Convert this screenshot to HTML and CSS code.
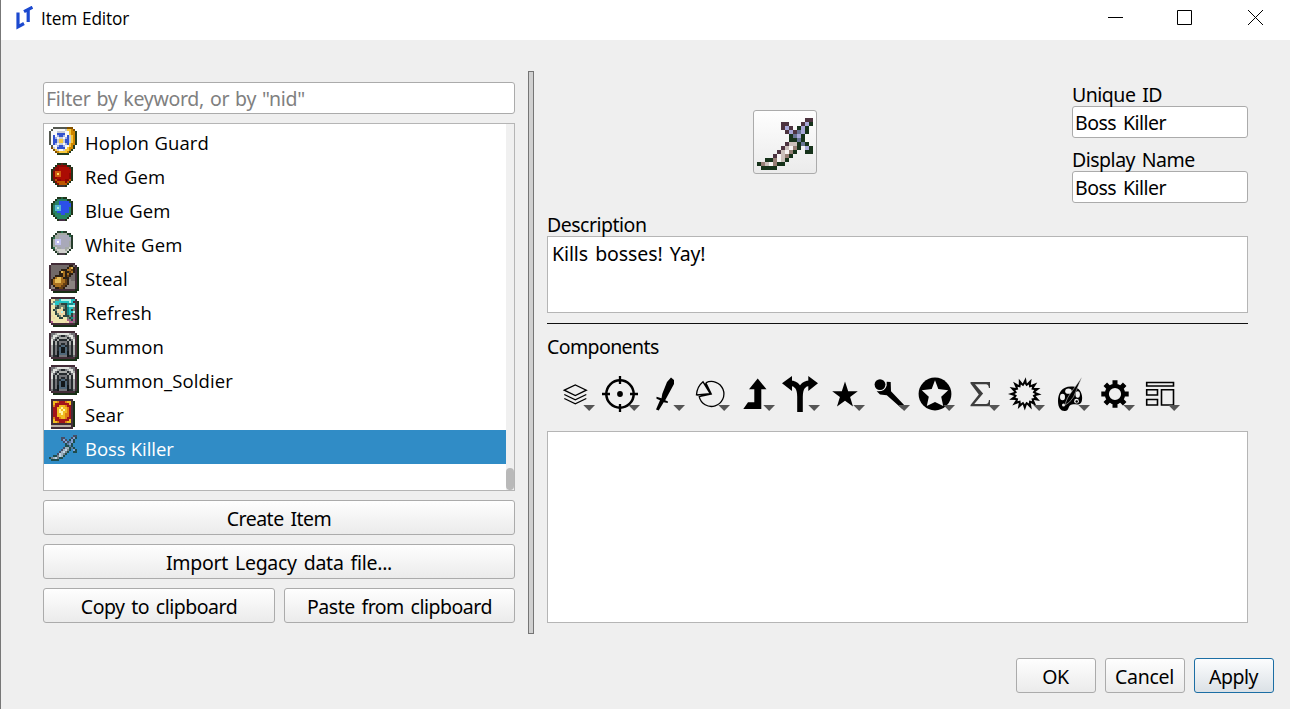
FILE: index.html
```html
<!DOCTYPE html>
<html lang="en">
<head>
<meta charset="utf-8">
<title>Item Editor</title>
<link rel="stylesheet" href="styles.css">
</head>
<body>
<div class="window">
  <header class="titlebar">
    <svg class="logo" viewBox="0 0 18 24"><path d="M3 6.5V20.8L9 17.5M9 5.7L17.5 1.2M13.2 3.5V16" fill="none" stroke="#1c49cf" stroke-width="3.2"/></svg>
    <h1 class="title">Item Editor</h1>
    <div class="controls">
      <svg viewBox="0 0 16 16"><path d="M1 7.5H16"/></svg>
      <svg viewBox="0 0 16 16"><path d="M.5 .5H14.5V14.5H.5Z"/></svg>
      <svg viewBox="0 0 16 16"><path d="M1 0L16 15M16 0L1 15"/></svg>
    </div>
  </header>

  <main class="content">
    <section class="browser">
      <input class="field filter" type="text" placeholder="Filter by keyword, or by &quot;nid&quot;">
      <div class="list">
        <ul class="items">
          <li class="item"><svg class="sprite" data-sprite="shield"></svg><span>Hoplon Guard</span></li>
          <li class="item"><svg class="sprite" data-sprite="redGem"></svg><span>Red Gem</span></li>
          <li class="item"><svg class="sprite" data-sprite="blueGem"></svg><span>Blue Gem</span></li>
          <li class="item"><svg class="sprite" data-sprite="whiteGem"></svg><span>White Gem</span></li>
          <li class="item"><svg class="sprite" data-sprite="steal"></svg><span>Steal</span></li>
          <li class="item"><svg class="sprite" data-sprite="refresh"></svg><span>Refresh</span></li>
          <li class="item"><svg class="sprite" data-sprite="summon"></svg><span>Summon</span></li>
          <li class="item"><svg class="sprite" data-sprite="summon"></svg><span>Summon_Soldier</span></li>
          <li class="item"><svg class="sprite" data-sprite="sear"></svg><span>Sear</span></li>
          <li class="item selected"><svg class="sprite" data-sprite="sword"></svg><span>Boss Killer</span></li>
        </ul>
        <div class="scrollbar"><div class="thumb"></div></div>
      </div>
      <button class="btn">Create Item</button>
      <button class="btn import">Import Legacy data file...</button>
      <div class="pair">
        <button class="btn copy">Copy to clipboard</button>
        <button class="btn paste">Paste from clipboard</button>
      </div>
    </section>

    <div class="splitter"></div>

    <section class="editor">
      <div class="identity">
        <button class="icon-button"><svg class="sprite-large" data-sprite="sword"></svg></button>
        <div class="names">
          <label class="label">Unique ID</label>
          <input class="field" type="text" value="Boss Killer">
          <label class="label second">Display Name</label>
          <input class="field" type="text" value="Boss Killer">
        </div>
      </div>
      <label class="label">Description</label>
      <div class="description">Kills bosses! Yay!</div>
      <hr class="rule">
      <div class="label components-label">Components</div>
      <div class="toolbar">
        <svg class="tool" viewBox="0 0 45 45"><path class="line" stroke-width="1.3" d="M11.3 18.2L22.3 13L33.3 18.2L22.3 23.5ZM11.3 22.5L22.3 27.8L33.3 22.5M11.3 26.5L22.3 31.8L33.3 26.5"/><path class="arrow" d="M30.3 33H42L36.2 39Z"/></svg>
        <svg class="tool" viewBox="0 0 45 45"><circle class="line" cx="22" cy="22" r="13.7" stroke-width="2.5"/><path class="line" stroke-width="2.3" d="M4 22H12M32 22H40M22 4V12M22 32V40"/><circle cx="22" cy="22" r="2.9"/><path class="arrow" d="M30.3 33H42L36.2 39Z"/></svg>
        <svg class="tool" viewBox="0 0 45 45"><path d="M28 5.5L31 8V12L22.2 28.2L25 29.4L24.7 31L20.7 30.2L15.7 38.6L13 37.4L17 28.3L13.5 26.7V24.8L18.5 26.3L19.3 21.8L24 10Z"/><path class="arrow" d="M30.3 33H42L36.2 39Z"/></svg>
        <svg class="tool" viewBox="0 0 45 45"><path class="line" stroke-width="1.3" d="M17.8 10.8A12.5 12.5 0 1 1 11.2 24.7L23.3 22L17.8 10.8M22.2 21.7L8.5 22.8Q9 14.8 15 9.8L22.2 21.7L17 11.5M9 23.2L22.5 21.8"/><path class="arrow" d="M30.3 33H42L36.2 39Z"/></svg>
        <svg class="tool" viewBox="0 0 45 45"><path d="M24.7 6.5L33.5 17.3H28.3V37H10.3L15 30.3H21.3V17.3H16Z"/><path class="arrow" d="M30.3 33H42L36.2 39Z"/></svg>
        <svg class="tool" viewBox="0 0 45 45"><path class="line" stroke-width="5.6" d="M12 11.2Q22 11 22 25V40M32 11.2Q22 11 22 25"/><path d="M4 11.3L14 4V19ZM40 11.3L30.3 4V19Z"/><path class="arrow" d="M30.3 33H42L36.2 39Z"/></svg>
        <svg class="tool" viewBox="0 0 45 45"><path d="M22 9.5L25.2 19.3H34.8L27.1 25.1L30 34.5L22 28.8L14 34.5L16.9 25.1L9.2 19.3H18.8Z"/><path class="arrow" d="M30.3 33H42L36.2 39Z"/></svg>
        <svg class="tool" viewBox="0 0 45 45"><circle cx="12" cy="12.6" r="5.4"/><path d="M18.7 9.8L22.7 9.9L23 19.2L37.3 34.3L34.6 37.2L18.8 23.2L12 22.5L8.7 19.3Q17 20 18.7 13.5Z"/><path class="arrow" d="M30.3 33H42L36.2 39Z"/></svg>
        <svg class="tool" viewBox="0 0 45 45"><circle cx="22" cy="22" r="16.4"/><path fill="#efefef" d="M22 8.2L25.3 17L35.2 18.2L28.2 24.8L30.2 34L22 30L13.8 34L15.8 24.8L8.8 18.2L18.7 17Z"/><path class="arrow" d="M30.3 33H42L36.2 39Z"/></svg>
        <svg class="tool" viewBox="0 0 45 45"><path fill="#3e3e3e" d="M12.5 10H32V16H30.9Q30.7 12.2 28 12.2H17L25.1 21.5L16.3 32H28Q30.7 32 30.9 28H32V34.3H12.5V33L20.8 22.5L12.5 11.6Z"/><path class="arrow" d="M30.3 33H42L36.2 39Z"/></svg>
        <svg class="tool" viewBox="0 0 45 45"><path fill-rule="evenodd" transform="translate(21.8 22)" d="M16.8 .5L10.8 2L15.2 7L9 6L11.7 12.2L6 9L7 15.5L2.1 10.6L0 16.5L-2.1 10.6L-7 15L-6 9L-12.5 11.5L-9 6L-15.6 5.8L-10.6 2.1L-16.8 0L-10.6 -2.1L-15.2 -7L-9 -6L-11.7 -12.2L-6 -9L-6 -15.2L-2.1 -10.6L1 -16.8L2.1 -10.6L6.8 -15.2L6 -9L12.5 -11.5L9 -6L15.6 -6L10.6 -2.1ZM10.3 0L7.8 -1.6L9.5 -4L6.6 -4.4L7.3 -7.3L4.4 -6.6L4 -9.5L1.6 -7.8L0 -10.3L-1.6 -7.8L-4 -9.5L-4.4 -6.6L-7.3 -7.3L-6.6 -4.4L-9.5 -4L-7.8 -1.6L-10.3 0L-7.8 1.6L-9.5 4L-6.6 4.4L-7.3 7.3L-4.4 6.6L-4 9.5L-1.6 7.8L0 10.3L1.6 7.8L4 9.5L4.4 6.6L7.3 7.3L6.6 4.4L9.5 4L7.8 1.6Z"/><path class="arrow" d="M30.3 33H42L36.2 39Z"/></svg>
        <svg class="tool" viewBox="0 0 45 45"><path d="M27 14.8C15 12.5 10 20 10 29C10 36 13 39.3 17 39C21 38.7 20 34.7 22.5 33C26 31 31 34.8 33.5 30C35 26 34 20 30.5 17Z"/><g fill="#efefef"><ellipse cx="20.5" cy="19.2" rx="3.3" ry="2.6"/><ellipse cx="14.5" cy="25" rx="2.5" ry="3.2"/><ellipse cx="29.7" cy="22.5" rx="2.2" ry="3.2"/><circle cx="28.5" cy="29.2" r="2.4"/><circle cx="15.5" cy="33" r="1.5"/></g><path d="M34 5L25.5 25L21.5 30L16.5 33.5L19.5 26L22 22Z" stroke="#efefef" stroke-width=".5"/><circle cx="28.7" cy="29.5" r="1.2"/><path class="arrow" d="M30.3 33H42L36.2 39Z"/></svg>
        <svg class="tool" viewBox="0 0 45 45"><circle class="line" cx="22" cy="22" r="8.2" stroke-width="4.2"/><path class="line" stroke-width="5" d="M22 8.3V13M22 31V35.7M8.3 22H13M31 22H35.7M12.3 12.3L15.7 15.7M28.3 28.3L31.7 31.7M31.7 12.3L28.3 15.7M15.7 28.3L12.3 31.7"/><path class="arrow" d="M30.3 33H42L36.2 39Z"/></svg>
        <svg class="tool" viewBox="0 0 45 45"><path class="line" stroke-width="1.6" d="M8.7 10.5H35.5V14H8.7ZM8.7 17.7H19.5V23H8.7ZM8.7 27.5H19.5V33H8.7ZM23.5 17.7H35.5V33H23.5Z"/><path class="arrow" d="M30.3 33H42L36.2 39Z"/></svg>
      </div>
      <div class="components"></div>
    </section>
  </main>

  <footer class="footer">
    <button class="btn">OK</button>
    <button class="btn cancel">Cancel</button>
    <button class="btn default">Apply</button>
  </footer>
</div>
<script src="sprites.js"></script>
</body>
</html>
```
FILE: styles.css
```css
* { box-sizing: border-box; }
body { margin: 0; }
.window {
  width: 1290px; height: 709px; display: flex; flex-direction: column;
  background: #efefef; border-left: 1px solid #777;
  font-family: "Noto Sans", sans-serif; font-size: 19.5px; letter-spacing: -0.5px; word-spacing: 2.2px; color: #000;
  overflow: hidden;
}
button, input { font: inherit; letter-spacing: inherit; word-spacing: inherit; color: inherit; margin: 0; }

.titlebar { height: 40px; flex: none; background: #fff; display: flex; align-items: center; padding: 0 27px 4px 14px; }
.logo { width: 18px; height: 24px; }
.title { margin: 1px 0 0 8px; font: 400 17.3px "Open Sans", sans-serif; letter-spacing: -0.15px; word-spacing: 0.5px; }
.controls { margin-left: auto; display: flex; gap: 54px; }
.controls svg { width: 16px; height: 16px; fill: none; stroke: #000; stroke-width: 1; }

.content { display: flex; align-items: flex-start; padding: 31px 42px 0; height: 594px; flex: none; }
.browser { width: 472px; padding-top: 11px; display: flex; flex-direction: column; gap: 9px; }
.field {
  display: block; width: 100%; height: 32px; padding: 0 2px; line-height: 30px;
  border: 1px solid #ababab; border-radius: 3px; background: #fff; outline: none;
}
.filter::placeholder { color: #808080; opacity: 1; }
.filter { letter-spacing: -0.3px; word-spacing: 1.2px; }
.list { height: 368px; display: flex; background: #fff; border: 1px solid #b5b5b5; }
.items { list-style: none; margin: 0; padding: 0; flex: 1; }
.item {
  height: 34px; display: flex; align-items: center; gap: 6px; padding-left: 3px;
  font-family: "Open Sans", sans-serif; font-size: 18.5px; letter-spacing: 0.12px; word-spacing: 0.5px;
}
.item span { padding-top: 2px; }
.selected { background: #308cc6; color: #fff; letter-spacing: -0.05px; }
.sprite { width: 32px; height: 32px; flex: none; }
.selected .sprite { opacity: .7; }
.scrollbar { width: 8px; display: flex; align-items: flex-end; height: 366px; background: #f0f0f0; }
.thumb { width: 8px; height: 22px; border-radius: 4px; background: #b9b9b9; }
.btn {
  height: 35px; padding: 2px 0 0; line-height: 30px; border: 1px solid #ababab; border-radius: 3px;
  background: linear-gradient(#fefefe, #ebebeb); text-align: center; white-space: nowrap;
}
.import { letter-spacing: -0.28px; }
.pair { display: flex; gap: 9px; }
.copy { width: 232px; }
.paste { width: 231px; }

.splitter { width: 6px; height: 563px; margin: 0 13px; border: 1px solid #757575; background: #d0d0d0; }

.editor { width: 701px; padding-top: 12px; }
.identity { display: flex; justify-content: flex-end; gap: 255px; height: 130px; }
.icon-button { width: 64px; height: 64px; padding: 0; margin-top: 27px; border: 1px solid #ababab; border-radius: 3px; background: linear-gradient(#fefefe, #ebebeb); }
.sprite-large { display: block; width: 64px; height: 64px; margin: -1px; }
.names { width: 176px; }
.label { display: block; height: 23px; line-height: 24px; white-space: nowrap; }
.second { margin-top: 10px; }
.description { height: 77px; border: 1px solid #b5b5b5; background: #fff; padding: 3px 4px; line-height: 27px; letter-spacing: -0.1px; }
.rule { height: 1px; margin: 10px 0 11px; border: 0; background: #111; }
.components-label { height: 26px; letter-spacing: -0.6px; }
.toolbar { display: flex; padding-left: 6px; height: 45px; margin: 11px 0 14px; }
.tool { width: 45px; height: 45px; flex: none; }
.line { fill: none; stroke: #000; }
.arrow { fill: #555; }
.components { height: 192px; background: #fff; border: 1px solid #b5b5b5; }

.footer { display: flex; justify-content: flex-end; gap: 9px; padding: 24px 16px 0 0; }
.footer .btn { width: 80px; padding-right: 1px; }
.footer .cancel { letter-spacing: -0.25px; }
.footer .default { border-color: #1c6ea4; background: linear-gradient(#fcfdfe, #dbe1e6); }
```
FILE: sprites.js
```js
// 16x16 pixel sprites; each letter is a palette colour, a dot is transparent.
const gem = [
  "................", "................",
  ".....KKEKK......", "....KaaaaaKK....", "...KaabbbbbEK...", "..KEaabbbbbbK...",
  "..KahhhbbbbbK...", "..KahghbbbbaK...", "..KahhhbbbbaK...", "..KaabbbbbbaK...",
  "..KEcaabbaacK...", "...KaccccacK....", "....KaccccK.....", ".....KkkkK......",
  "................", "................"];

const frame = { K: "#432d38", D: "#182f16" };
const sprites = {
  sword: {
    palette: { P: "#4d3440", G: "#17331b", L: "#a8a8d8", S: "#687494", W: "#f8f5f4", T: "#cbc0bb", B: "#967f76" },
    rows: ["................", "................",
      ".............PP.", ".......PP...PLG.", ".......PLP.GLG..", "........PLPSLG..",
      ".........GSLG...", ".........GGSG...", "........PTTGSG..", ".......PTWBG.LG.",
      "......PTWBG..GG.", ".....PWTBG......", "...GGBWTG.......", ".GBTWBGG........",
      "..GGGG..........", "................"]
  },
  shield: {
    palette: { G: "#54584f", K: "#263d20", W: "#f8f8f8", S: "#c9cbd2", O: "#ce8500", Y: "#f8c83c", B: "#3151cf", L: "#a4b2e5", D: "#815000" },
    rows: ["................",
      "...GGGGGGGDDD...", "..GWWWWWWSYYOD..", ".GWWWSSSSWWYOOK.", ".GWWWBBBBWWYOOK.",
      ".GWBWLBBLWBSYOK.", ".GWBLWSSWLBSYOK.", ".GWBBSYYSBBSYOK.", ".GWBBSYYSBBSYOK.",
      ".GWBLWSSWLBYOOK.", "..GWWLBBLWWYOK..", "..DSWBBBBWYOOK..", "...DYSWWSYYOK...",
      "....DOYYYYOK....", ".....KKKKKK.....", "................"]
  },
  redGem: { rows: gem, palette: { K: "#22351b", k: "#3e3334", E: "#5b221c", a: "#8c0804", b: "#ab0c04", c: "#bd5700", h: "#cf5a10", g: "#ffe060" } },
  blueGem: { rows: gem, palette: { K: "#22351b", k: "#452e47", E: "#23653d", a: "#278066", b: "#2b50e8", c: "#288760", h: "#54b5d3", g: "#aaf2db" } },
  whiteGem: { rows: gem, palette: { K: "#263d2b", k: "#493d48", E: "#29704e", a: "#a4aaa4", b: "#a9a9b9", c: "#d0d0cd", h: "#c0c0ee", g: "#fff" } },
  steal: {
    palette: { ...frame, s: "#716968", t: "#8b8380", b: "#2c2014", o: "#a87020", y: "#e6bc56", d: "#684014" },
    rows: ["................",
      "..KKKKKKKKKKKK..", ".KsssssssssbbsK.", ".KssssssssboybKD", ".KsssssbbboodbKD",
      ".KssssbyobbdobKD", ".KssssbbobobbsKD", ".KssbbbbobdbssKD", ".KsboyyobbbsssKD",
      ".KboyyyoodbtssKD", ".KboyyyoodbtttKD", ".KboooooddbtttKD", ".KtboooddbttttKD",
      ".KttbbddbtttttKD", "..KKKKKKKKKKKKDD", "...DDDDDDDDDDDD."]
  },
  refresh: {
    palette: { ...frame, g: "#738675", c: "#21c2c4", w: "#b3f3e8", h: "#eee5ae", s: "#eed6a6", b: "#2d4440", p: "#b05c8c", t: "#188789" },
    rows: ["................",
      "..KKKKKKKKKKKK..", ".KhhggcwwwwwccK.", ".KhgcccccccwcKKD", ".KgwccgbbbtttcKD",
      ".KhhgbgggbcwwwKD", ".KhhbbghgbtccgKD", ".KhbghssbbtcbgKD", ".KhhbsswsbtccwKD",
      ".KhhbgsssbtcbgKD", ".KshhbgsbbbgbpKD", ".KhshhbbhhgbtgKD", ".KhhhhhhhhpgbpKD",
      ".KphhhhhhshppgKD", "..KKKKKKKKKKKKDD", "...DDDDDDDDDDDD."]
  },
  summon: {
    palette: { ...frame, g: "#737478", w: "#e1e4df", s: "#a8aaa8", b: "#252a2d", i: "#506779", d: "#121719" },
    rows: ["................",
      "..KKKKKKKKKKKK..", ".KggswwwwwwsggK.", ".KgwwsgbbgswwgKD", ".KswgbssssbgwsKD",
      ".KwgbsbbbbsbgwKD", ".KwbsbggggbsbwKD", ".KwbsbgbbgbsbwKD", ".KsbgbbiibbgbsKD",
      ".KsbgbiddibgbsKD", ".KsbgbiddibgbsKD", ".KsbgdiddidgbsKD", ".KsbgdiiiidgbsKD",
      ".KgbbdggggdbbgKD", "..KKKKKKKKKKKKDD", "...DDDDDDDDDDDD."]
  },
  sear: {
    palette: { ...frame, r: "#a3141b", y: "#f0bd20", o: "#df7f13", w: "#fff3a2", s: "#bbaea5" },
    rows: ["................",
      "..KKKKKKKKKKK...", "..KyyorrroyyKD..", "..KyrrrrrrryKD..", "..KorryyyorrKD..",
      "..KrryywyyorKD..", "..KrrywywyorKD..", "..KrrywwyyorKD..", "..KrryywyoorKD..",
      "..KrryyyyoorKD..", "..KorroyyorrKD..", "..KyrrrrrrryKD..", "..KyyorrroyyKD..",
      "..KKKKKKKKKKKD..", "..ssssssssssKD..", "..KKKKKKKKKKK..."]
  }
};

for (const svg of document.querySelectorAll("[data-sprite]")) {
  const { palette, rows } = sprites[svg.dataset.sprite];
  svg.setAttribute("viewBox", "0 0 16 16");
  svg.setAttribute("shape-rendering", "crispEdges");
  svg.innerHTML = rows.map((row, y) => [...row].map((c, x) =>
    c === "." ? "" : `<rect x="${x}" y="${y}" width="1" height="1" fill="${palette[c]}"/>`).join("")).join("");
}
```
